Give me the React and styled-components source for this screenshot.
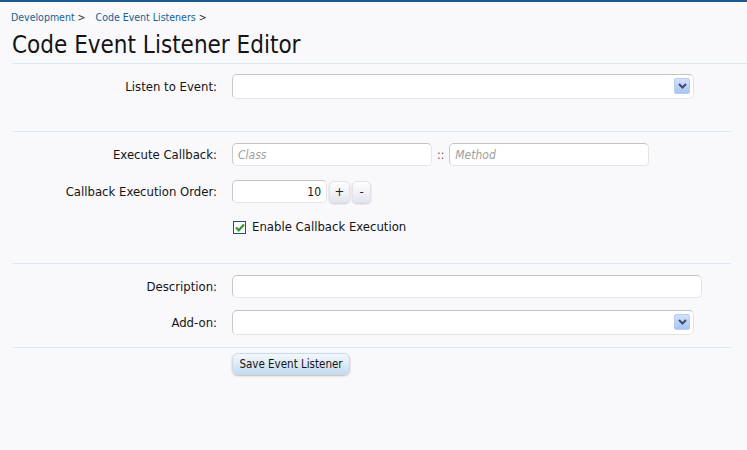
import React from 'react';
import styled, { createGlobalStyle } from 'styled-components';

const GlobalStyle = createGlobalStyle`
  html, body {
    margin: 0;
    padding: 0;
    background: #f9f9fc;
  }
  body {
    font-family: 'DejaVu Sans Condensed', 'DejaVu Sans', Tahoma, sans-serif;
    font-size: 13px;
    color: #141414;
  }
`;

const Page = styled.div`
  border-top: 2px solid #1a5c92;
  min-height: 448px;
`;

const Breadcrumb = styled.nav`
  display: flex;
  gap: 10px;
  padding: 7px 0 0 11px;
  font-size: 10.5px;
  line-height: 16px;
  color: #176093;
`;

const Crumb = styled.a`
  color: #176093;
  text-decoration: none;
  &:after {
    content: ' >';
    color: #333;
  }
`;

const Title = styled.h1`
  margin: 5px 0 0 12px;
  padding: 0 0 3px;
  font-size: 24px;
  font-weight: normal;
  line-height: 30px;
  color: #141414;
  border-bottom: 1px solid #dfe9f3;
`;

const Form = styled.form`
  margin: 0 16px 0 12px;
`;

const Section = styled.fieldset`
  margin: 0;
  border: none;
  border-bottom: 1px solid #dbebf5;
  padding: ${p => p.$pad};
  display: flex;
  flex-direction: column;
  gap: ${p => p.$gap || '0px'};
`;

const Row = styled.div`
  display: grid;
  grid-template-columns: 205px 1fr;
  column-gap: 15px;
  align-items: center;
  margin-top: ${p => p.$top || '0px'};
`;

const Label = styled.label`
  text-align: right;
  line-height: 16px;
`;

const Controls = styled.div`
  display: flex;
  align-items: center;
  gap: ${p => p.$gap || '0px'};
`;

const TextInput = styled.input`
  box-sizing: border-box;
  width: ${p => p.$w}px;
  height: 23px;
  padding: 2px 5px;
  border: 1px solid;
  border-color: #c4c4c4 #e4e4e4 #e4e4e4 #c8c8c8;
  border-radius: 5px;
  background: #fff;
  font-family: inherit;
  font-size: 12px;
  color: #141414;
  text-align: ${p => p.$align || 'left'};
  outline: none;
  &::placeholder {
    color: #a0a0a0;
    font-style: italic;
  }
`;

const SelectBox = styled.div`
  position: relative;
  box-sizing: border-box;
  width: 462px;
  height: 25px;
  border: 1px solid;
  border-color: #c4c4c4 #e4e4e4 #e4e4e4 #c8c8c8;
  border-radius: 5px;
  background: #fff;
`;

const Arrow = styled.span`
  position: absolute;
  right: 3px;
  top: 3px;
  width: 16px;
  height: 16px;
  box-sizing: border-box;
  border: 1px solid #b8ccf2;
  border-radius: 2px;
  background: linear-gradient(#d3e1fc, #a9c3f4);
  display: flex;
  align-items: center;
  justify-content: center;
`;

const Sep = styled.span`
  color: #555;
  font-size: 12px;
`;

const SpinButton = styled.button`
  box-sizing: border-box;
  width: ${p => p.$w}px;
  height: 22px;
  padding: 0;
  border: 1px solid #e2e2ea;
  border-radius: 5px;
  background: linear-gradient(#ffffff, #e4e4ee);
  box-shadow: 0 1px 2px rgba(0, 0, 0, 0.2);
  font-family: inherit;
  font-size: 13px;
  color: #222;
`;

const Check = styled.label`
  display: flex;
  align-items: center;
  gap: 6px;
  line-height: 16px;
`;

const Box = styled.span`
  box-sizing: border-box;
  width: 13px;
  height: 13px;
  margin-left: 1px;
  border: 1px solid #1c5180;
  background: #fff;
  display: flex;
  align-items: center;
  justify-content: center;
`;

const SubmitRow = styled.div`
  padding: 5px 0 0 220px;
`;

const Submit = styled.button`
  box-sizing: border-box;
  width: 118px;
  height: 22px;
  padding: 0;
  border: 1px solid #c9dbea;
  border-radius: 6px;
  background: linear-gradient(#f4f8fc, #c5dcef);
  box-shadow: 0 1px 2px rgba(0, 0, 0, 0.25);
  font-family: inherit;
  font-size: 11.5px;
  color: #141414;
`;

const Chevron = () => (
  <svg width="9" height="6" viewBox="0 0 9 6">
    <path d="M1 1 L4.5 4.5 L8 1" stroke="#3d4d6e" strokeWidth="2" fill="none" />
  </svg>
);

const Select = () => (
  <SelectBox>
    <Arrow><Chevron /></Arrow>
  </SelectBox>
);

const App = () => (
  <Page>
    <GlobalStyle />
    <Breadcrumb>
      <Crumb href="#">Development</Crumb>
      <Crumb href="#">Code Event Listeners</Crumb>
    </Breadcrumb>
    <Title>Code Event Listener Editor</Title>
    <Form>
      <Section $pad="10px 0 32px">
        <Row>
          <Label>Listen to Event:</Label>
          <Controls><Select /></Controls>
        </Row>
      </Section>
      <Section $pad="11px 0 28px" $gap="14px">
        <Row>
          <Label>Execute Callback:</Label>
          <Controls $gap="5px">
            <TextInput $w={200} placeholder="Class" />
            <Sep>::</Sep>
            <TextInput $w={200} placeholder="Method" />
          </Controls>
        </Row>
        <Row>
          <Label>Callback Execution Order:</Label>
          <Controls $gap="2px">
            <TextInput $w={95} $align="right" defaultValue="10" />
            <SpinButton $w={21} type="button">+</SpinButton>
            <SpinButton $w={19} type="button">-</SpinButton>
          </Controls>
        </Row>
        <Row $top="2px">
          <span />
          <Check>
            <Box>
              <svg width="10" height="9" viewBox="0 0 10 9">
                <path d="M1 4.5 L3.8 7.3 L9 1.5" stroke="#2c9a2a" strokeWidth="2.2" fill="none" />
              </svg>
            </Box>
            Enable Callback Execution
          </Check>
        </Row>
      </Section>
      <Section $pad="11px 0 12px" $gap="12px">
        <Row>
          <Label>Description:</Label>
          <Controls><TextInput $w={470} /></Controls>
        </Row>
        <Row>
          <Label>Add-on:</Label>
          <Controls><Select /></Controls>
        </Row>
      </Section>
      <SubmitRow>
        <Submit type="button">Save Event Listener</Submit>
      </SubmitRow>
    </Form>
  </Page>
);

export default App;
